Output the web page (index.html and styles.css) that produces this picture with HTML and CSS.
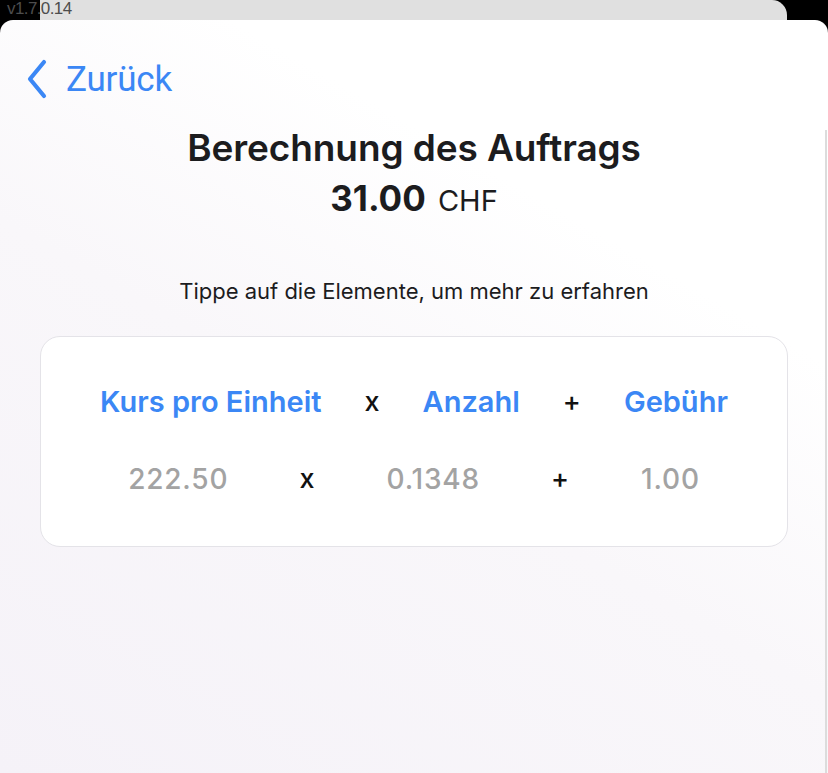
FILE: index.html
```html
<!DOCTYPE html>
<html>
	<head>
		<meta charset="UTF-8">
		<title>Berechnung des Auftrags</title>
		<link rel="stylesheet" href="styles.css">
	</head>
	<body>
		<div class="version">v1.7.0.14</div>
		<div class="backsheet"></div>
		<div class="sheet">
			<div class="nav">
				<a class="back" href="#">
					<svg width="24" height="40" viewBox="0 0 24 40"><path d="M19 3 L5 20 L19 37" fill="none" stroke="#3b87f5" stroke-width="4.2" stroke-linecap="round" stroke-linejoin="round"/></svg>
					<span>Zurück</span>
				</a>
			</div>
			<div class="head">
				<h1>Berechnung des Auftrags</h1>
				<div class="total"><b>31.00</b> CHF</div>
			</div>
			<p class="hint">Tippe auf die Elemente, um mehr zu erfahren</p>
			<div class="card">
				<div class="row labels">
					<a href="#">Kurs pro Einheit</a>
					<span class="op">x</span>
					<a href="#">Anzahl</a>
					<span class="op">+</span>
					<a href="#">Gebühr</a>
				</div>
				<div class="row values">
					<span>222.50</span>
					<span class="op">x</span>
					<span>0.1348</span>
					<span class="op">+</span>
					<span>1.00</span>
				</div>
			</div>
		</div>
	</body>
</html>
```
FILE: styles.css
```css
*{
	margin:0;
	padding:0;
	box-sizing:border-box;
}
html,body{
	width:828px;
	height:773px;
	overflow:hidden;
}
body{
	background:#000;
	font-family:Inter, "Noto Sans", sans-serif;
	color:#1c1c1e;
	position:relative;
}
a{
	text-decoration:none;
}
div.version{
	position:absolute;
	left:7px;
	top:0;
	font-family:"Liberation Sans Narrow", "Liberation Sans", sans-serif;
	font-size:17px;
	line-height:18px;
	letter-spacing:-0.6px;
	color:#4d4d4d;
	z-index:2;
}
div.backsheet{
	margin-left:40px;
	width:747px;
	height:20px;
	background:#e0e0e0;
	border-radius:0 15px 0 0;
}
div.sheet{
	height:753px;
	border-radius:13px 13px 0 0;
	background:linear-gradient(210deg, #ffffff 28%, #f9f7fa 55%, #f5f2f8 100%);
	position:relative;
}
div.sheet::after{
	content:"";
	position:absolute;
	right:1px;
	top:110px;
	bottom:0;
	width:2px;
	background:#dcdcdc;
}
div.nav{
	padding:38px 0 0 25px;
	height:100px;
}
a.back{
	display:flex;
	align-items:center;
	gap:17px;
	color:#3b87f5;
}
a.back span{
	font-family:Roboto, "Liberation Sans", sans-serif;
	font-size:35px;
	letter-spacing:-0.2px;
	line-height:40px;
	padding-top:2px;
}
div.head{
	text-align:center;
	padding-top:6px;
}
div.head h1{
	font-size:37px;
	font-weight:600;
	line-height:44px;
	letter-spacing:-0.1px;
}
div.total{
	font-size:29px;
	line-height:44px;
	margin-top:6px;
}
div.total b{
	font-size:35px;
	font-weight:700;
	margin-right:4px;
}
p.hint{
	text-align:center;
	font-size:22px;
	margin-top:54px;
	line-height:28px;
	color:#1c1c1e;
}
div.card{
	margin:31px 40px 0;
	height:211px;
	background:#fff;
	border:1.5px solid #e4e3e8;
	border-radius:20px;
	padding:48px 16px 0;
}
div.row{
	display:flex;
	justify-content:space-evenly;
	align-items:center;
	font-size:29px;
	font-weight:600;
	line-height:34px;
}
div.row.labels a{
	color:#3b87f5;
}
div.row .op{
	font-weight:500;
	color:#111;
	font-size:27px;
}
div.row.values{
	margin-top:43px;
	color:#a3a3a3;
	font-size:28px;
	font-weight:500;
	letter-spacing:0.8px;
}
```
